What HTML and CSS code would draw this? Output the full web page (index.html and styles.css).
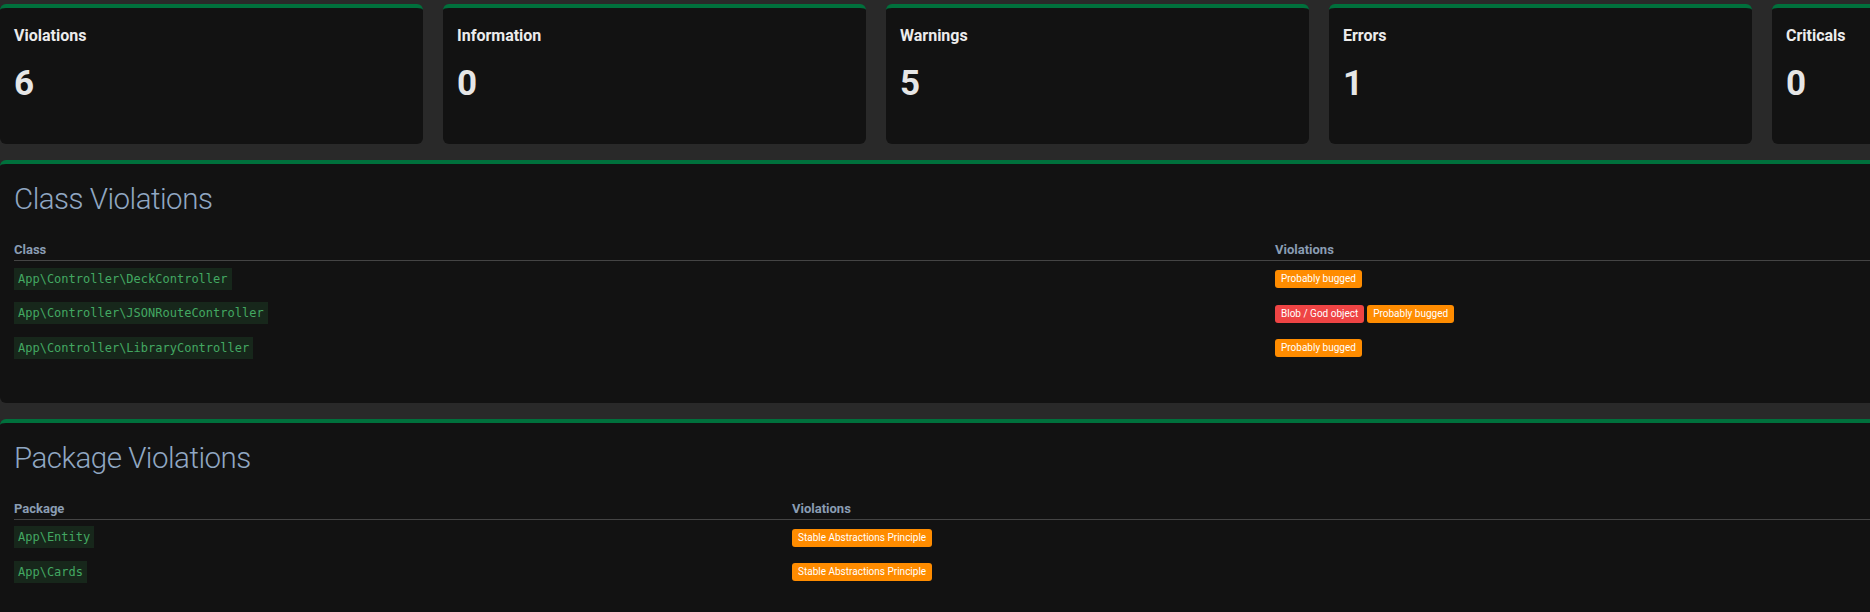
FILE: index.html
```html
<!DOCTYPE html>
<html lang="en">
<head>
<meta charset="utf-8">
<title>Violations</title>
<link rel="stylesheet" href="styles.css">
</head>
<body>
<div class="page">
  <div class="stats">
    <div class="stat"><div class="stat-title">Violations</div><div class="stat-value">6</div></div>
    <div class="stat"><div class="stat-title">Information</div><div class="stat-value">0</div></div>
    <div class="stat"><div class="stat-title">Warnings</div><div class="stat-value">5</div></div>
    <div class="stat"><div class="stat-title">Errors</div><div class="stat-value">1</div></div>
    <div class="stat"><div class="stat-title">Criticals</div><div class="stat-value">0</div></div>
  </div>

  <section class="panel">
    <h2 class="panel-title">Class Violations</h2>
    <table class="vtable">
      <colgroup><col class="col-class"><col></colgroup>
      <thead><tr><th>Class</th><th>Violations</th></tr></thead>
      <tbody>
        <tr><td><code class="name">App\Controller\DeckController</code></td><td><span class="badge warn">Probably bugged</span></td></tr>
        <tr><td><code class="name">App\Controller\JSONRouteController</code></td><td><span class="badge err">Blob / God object</span> <span class="badge warn">Probably bugged</span></td></tr>
        <tr><td><code class="name">App\Controller\LibraryController</code></td><td><span class="badge warn">Probably bugged</span></td></tr>
      </tbody>
    </table>
  </section>

  <section class="panel">
    <h2 class="panel-title">Package Violations</h2>
    <table class="vtable">
      <colgroup><col class="col-package"><col></colgroup>
      <thead><tr><th>Package</th><th>Violations</th></tr></thead>
      <tbody>
        <tr><td><code class="name">App\Entity</code></td><td><span class="badge warn">Stable Abstractions Principle</span></td></tr>
        <tr><td><code class="name">App\Cards</code></td><td><span class="badge warn">Stable Abstractions Principle</span></td></tr>
      </tbody>
    </table>
  </section>
</div>
</body>
</html>
```
FILE: styles.css
```css
html, body {
  margin: 0;
  padding: 0;
  background: #292929;
  overflow: hidden;
}
body {
  font-family: Roboto, "Liberation Sans", Arial, sans-serif;
  color: #e6e6e6;
}
.page {
  width: 2195px;
  padding-top: 4px;
}
.stats {
  display: flex;
  gap: 20px;
}
.stat {
  flex: 0 0 423px;
  box-sizing: border-box;
  height: 140px;
  background: #121212;
  border-top: 4px solid #00703c;
  border-radius: 6px;
  padding: 18px 14px 0;
}
.stat-title {
  font-size: 16px;
  font-weight: 700;
  line-height: 19.2px;
  color: #ececec;
}
.stat-value {
  margin-top: 18px;
  font-size: 35px;
  font-weight: 700;
  line-height: 42px;
  color: #e6e6e6;
}
.panel {
  margin-top: 16px;
  background: #121212;
  border-top: 4px solid #00703c;
  border-radius: 6px;
  padding: 16px 14px 38px;
}
.panel-title {
  margin: 0 0 22px;
  font-size: 29.5px;
  font-weight: 300;
  letter-spacing: -0.5px;
  line-height: 38.4px;
  color: #90a7c2;
}
.vtable {
  border-collapse: collapse;
  width: 100%;
  table-layout: fixed;
}
.col-class { width: 1261px; }
.col-package { width: 778px; }
.vtable th {
  text-align: left;
  font-size: 13px;
  font-weight: 700;
  line-height: 15.6px;
  color: #8a9db3;
  padding: 2px 0 2px;
  border-bottom: 1px solid #444;
}
.vtable td {
  padding: 0;
  height: 34.5px;
  vertical-align: middle;
  line-height: 22px;
}
.name {
  display: inline-block;
  font-family: "DejaVu Sans Mono", "Liberation Mono", monospace;
  font-size: 12px;
  line-height: 22px;
  padding: 0 4px;
  color: #43a862;
  background: #17271b;
  vertical-align: middle;
}
.badge {
  display: inline-block;
  vertical-align: middle;
  font-size: 10px;
  font-weight: 400;
  line-height: 18px;
  padding: 0 6px;
  border-radius: 3px;
  color: #fff;
}
.badge + .badge { margin-left: -1px; }
.badge.warn { background: #ff8c00; }
.badge.err { background: #ef4444; }
```
